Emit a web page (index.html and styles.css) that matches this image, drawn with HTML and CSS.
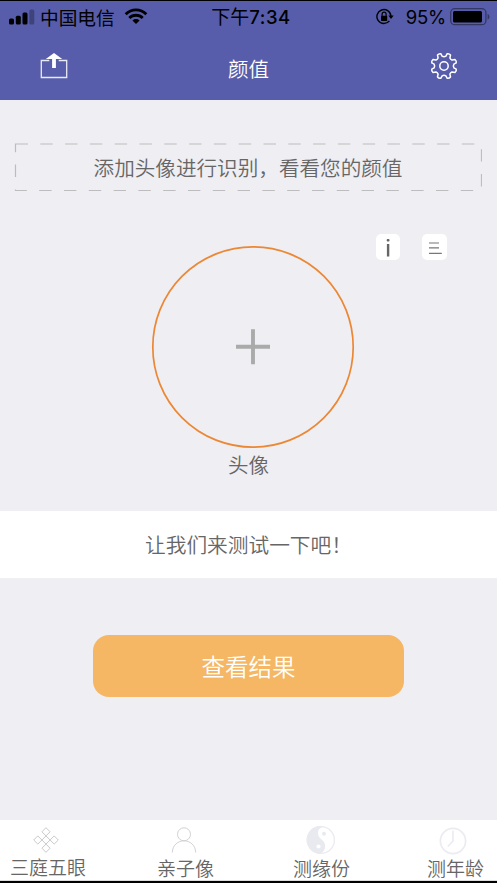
FILE: index.html
```html
<!DOCTYPE html>
<html lang="zh-CN">
<head>
<meta charset="utf-8">
<title>颜值</title>
<link rel="stylesheet" href="styles.css">
</head>
<body>
<div class="screen">
  <header class="header">
    <div class="status">
      <div class="status-left">
        <svg class="signal" width="26" height="17" viewBox="0 0 26 17"><rect x="0" y="9.5" width="5" height="6" rx="1.5"/><rect x="6.8" y="6.7" width="5" height="8.8" rx="1.5"/><rect x="13.5" y="3.5" width="5" height="12" rx="1.5"/><rect x="20.3" y=".5" width="5" height="15" rx="1.5" opacity=".28"/></svg>
        <span class="carrier">中国电信</span>
        <svg class="wifi" width="24" height="18" viewBox="0 0 24 18"><g fill="none" stroke="#000" stroke-width="2.9"><path d="M1.7 6.2A14.5 14.5 0 0 1 22.3 6.2"/><path d="M5.3 10A9.5 9.5 0 0 1 18.7 10"/></g><path d="M8.4 12.4A5.2 5.2 0 0 1 15.6 12.4L12 16Z"/></svg>
      </div>
      <span class="time"><span class="period">下午</span>7:34</span>
      <div class="status-right">
        <svg width="18" height="18" viewBox="0 0 18 18"><path d="M13.4 12.9A7 7 0 1 1 14.9 8" fill="none" stroke="#000" stroke-width="1.4"/><path d="M12.4 7.6H17.7L15 11Z"/><rect x="5" y="7.7" width="6.2" height="5.2" rx=".7"/><path d="M6.1 8V6.2a2 2 0 0 1 4 0V8" fill="none" stroke="#000" stroke-width="1.2"/></svg>
        <span class="percent">95%</span>
        <svg class="battery" width="41" height="18" viewBox="0 0 41 18"><rect x=".7" y=".7" width="35.2" height="16" rx="4" fill="none" stroke="#343763" stroke-width="1.3"/><rect x="3" y="3" width="29" height="11.5" rx="1.5"/><path d="M37.6 5.7Q39.5 6.5 39.5 8.7T37.6 11.7Z" fill="#343763"/></svg>
      </div>
    </div>
    <nav class="nav">
      <svg width="28" height="26" viewBox="0 0 28 26"><path d="M9.3 7.5H1.3V24.5H26.7V7.5H18.7" fill="none" stroke="#e8e9f6" stroke-width="1.3"/><path d="M14 0L22.2 6H15.9V15H12.1V6H5.8Z" fill="#fff"/></svg>
      <h1>颜值</h1>
      <svg width="28" height="28" viewBox="-14 -14 28 28" fill="none" stroke="#fff" stroke-width="1.5" stroke-linejoin="round"><path d="M1.9-9.9L3.1-12.2Q5-12.8 6.5-11L5.9-8Q6.6-6.6 8-5.9L11-6.5Q12.8-5 12.2-3.1L9.9-1.9Q8.8 0 9.9 1.9L12.2 3.1Q12.8 5 11 6.5L8 5.9Q6.6 6.6 5.9 8L6.5 11Q5 12.8 3.1 12.2L1.9 9.9Q0 8.8-1.9 9.9L-3.1 12.2Q-5 12.8-6.5 11L-5.9 8Q-6.6 6.6-8 5.9L-11 6.5Q-12.8 5-12.2 3.1L-9.9 1.9Q-8.8 0-9.9-1.9L-12.2-3.1Q-12.8-5-11-6.5L-8-5.9Q-6.6-6.6-5.9-8L-6.5-11Q-5-12.8-3.1-12.2L-1.9-9.9Q0-8.8 1.9-9.9Z"/><circle r="4.2"/></svg>
    </nav>
  </header>
  <main>
    <div class="prompt">
      <svg class="dashes" width="468" height="49" viewBox="0 0 468 49"><path d="M1.5 1H467.5V47.5H1.5Z" fill="none" stroke="#bdbdc0" stroke-width="1.2" stroke-dasharray="12.4 12.4"/></svg>
      <p>添加头像进行识别，看看您的颜值</p>
    </div>
    <div class="tools">
      <svg class="tool" width="24" height="26" viewBox="0 0 24 26"><rect x="10.7" y="5" width="2.8" height="2.6" rx="1"/><rect x="10.9" y="10" width="2.4" height="12.5"/></svg>
      <svg class="tool" width="25" height="26" viewBox="0 0 25 26"><path d="M7 9H17M7 13.8H17M7 19.3H19.8" fill="none" stroke="#777" stroke-width="1.2"/></svg>
    </div>
    <div class="avatar">
      <svg width="204" height="204" viewBox="0 0 204 204"><circle cx="102" cy="102" r="100.2" fill="none" stroke="#ec8734" stroke-width="1.7"/><path d="M102 84.3V119.3M85 101.8H119" fill="none" stroke="#aaa" stroke-width="3.9"/></svg>
    </div>
    <p class="avatar-label">头像</p>
    <section class="message">让我们来测试一下吧！</section>
    <button class="result">查看结果</button>
  </main>
  <footer class="tabs">
    <div class="tab tab-face">
      <svg width="28" height="28" viewBox="-14 -14 28 28" fill="none" stroke="#cacacc" stroke-width="1"><path d="M0-12.3L4.1-8.2L0-4.1L-4.1-8.2ZM0 4.1L4.1 8.2L0 12.3L-4.1 8.2ZM-8.2-4.1L-4.1 0L-8.2 4.1L-12.3 0ZM8.2-4.1L12.3 0L8.2 4.1L4.1 0ZM0-4.1L4.1 0L0 4.1L-4.1 0Z"/></svg>
      <span>三庭五眼</span>
    </div>
    <div class="tab tab-child">
      <svg width="28" height="28" viewBox="0 0 28 28" fill="none" stroke="#d2d2d4"><circle cx="14" cy="8.3" r="6.5"/><path d="M2.3 26.5C2.5 19.5 7.6 14.8 14 14.8S25.5 19.5 25.7 26.5"/></svg>
      <span>亲子像</span>
    </div>
    <div class="tab tab-fate">
      <svg width="30" height="30" viewBox="-15 -15 30 30"><circle r="13.4" fill="#fff" stroke="#ebebf1" stroke-width="1.3"/><path d="M3.5-13.5A14 14 0 1 0-1 13.9C4 12 5.5 6 3 2C1-1-3-2-3-7C-3-11 0-13 3.5-13.5Z" fill="#e9e9f0"/><circle cx="3" cy="-6.2" r="2" fill="#e9e9f0"/><circle cx="-2.5" cy="6.5" r="2.1" fill="#fff"/></svg>
      <span>测缘份</span>
    </div>
    <div class="tab tab-age">
      <svg width="28" height="28" viewBox="0 0 28 28" fill="none" stroke="#ebebf2" stroke-width="1.7"><circle cx="14" cy="14" r="12.6"/><path d="M14 3.8V14L8.8 19.5"/></svg>
      <span>测年龄</span>
    </div>
  </footer>
</div>
</body>
</html>
```
FILE: styles.css
```css
* { box-sizing: border-box; }
body, h1, p { margin: 0; }
body { font-family: "Noto Sans CJK SC", sans-serif; color: #666; }
svg { display: block; flex: none; }
.screen {
  width: 497px;
  height: 883px;
  display: flex;
  flex-direction: column;
  background: #eeeef3;
  border-top: 1px solid #000;
  border-bottom: 2px solid #000;
  overflow: hidden;
}
.header { height: 99px; background: #575dab; flex: none; }
.status {
  height: 32px;
  display: grid;
  grid-template-columns: 1fr auto 1fr;
  align-items: center;
  color: #000;
  padding: 0 6px 0 9px;
}
.status-left, .status-right { display: flex; align-items: center; }
.status-right { justify-content: flex-end; }
.carrier { font-size: 18.7px; line-height: 30px; margin-left: 5px; padding-bottom: 1px; }
.wifi { margin-left: 9px; }
.time, .percent { font-family: Inter, "Noto Sans CJK SC", sans-serif; font-size: 18.5px; line-height: 30px; white-space: nowrap; }
.time { font-weight: 500; letter-spacing: .5px; padding-left: 2px; }
.period { font-weight: 400; font-size: 19px; letter-spacing: 0; }
.percent { margin: 0 4px 0 12px; letter-spacing: -.2px; }
.nav {
  height: 67px;
  display: flex;
  justify-content: space-between;
  align-items: center;
  padding: 0 39px 1px 40px;
}
.nav h1 { color: #fff; font-size: 20.5px; font-weight: 350; line-height: 30px; padding: 3px 1px 0 0; }
main { flex: 1; display: flex; flex-direction: column; align-items: center; font-weight: 350; }
.prompt { display: grid; width: 468px; height: 49px; margin: 43px 1px 0 0; place-items: center; }
.prompt > * { grid-area: 1 / 1; }
.prompt p { font-size: 20.6px; line-height: 30px; white-space: nowrap; padding-bottom: 2px; }
.tools { display: flex; gap: 22px; align-self: flex-end; margin: 42px 50px 0 0; }
.tool { background: #fff; border-radius: 5px; fill: #666; }
.avatar { margin: -15px 0 0 9px; }
.avatar-label { font-size: 20.5px; line-height: 30px; margin-top: 0; }
.message {
  align-self: stretch;
  height: 67px;
  margin-top: 32px;
  background: #fff;
  text-align: center;
  font-size: 20.7px;
  line-height: 66px;
}
.result {
  width: 311px;
  height: 62px;
  margin-top: 57px;
  border: 0;
  border-radius: 16px;
  background: #f5b763;
  color: #fff;
  font: 350 23.5px/62px "Noto Sans CJK SC", sans-serif;
  padding: 0;
}
.tabs {
  flex: none;
  height: 61px;
  background: #fff;
  border-bottom: 1px solid #ddd;
  display: flex;
  padding: 0 0 0 10px;
  font-size: 19px;
  font-weight: 350;
}
.tab { display: flex; flex-direction: column; align-items: center; padding-top: 6px; }
.tab svg { margin-right: 5px; }
.tab span { line-height: 26px; white-space: nowrap; }
.tab-child { margin-left: 71px; }
.tab-child span { padding-top: 1px; }
.tab-child svg { margin-right: 3px; }
.tab-fate { margin-left: 79px; padding-top: 5px; }
.tab-fate svg { margin-right: 2px; }
.tab-age { margin-left: 77px; padding-top: 7px; }
```
